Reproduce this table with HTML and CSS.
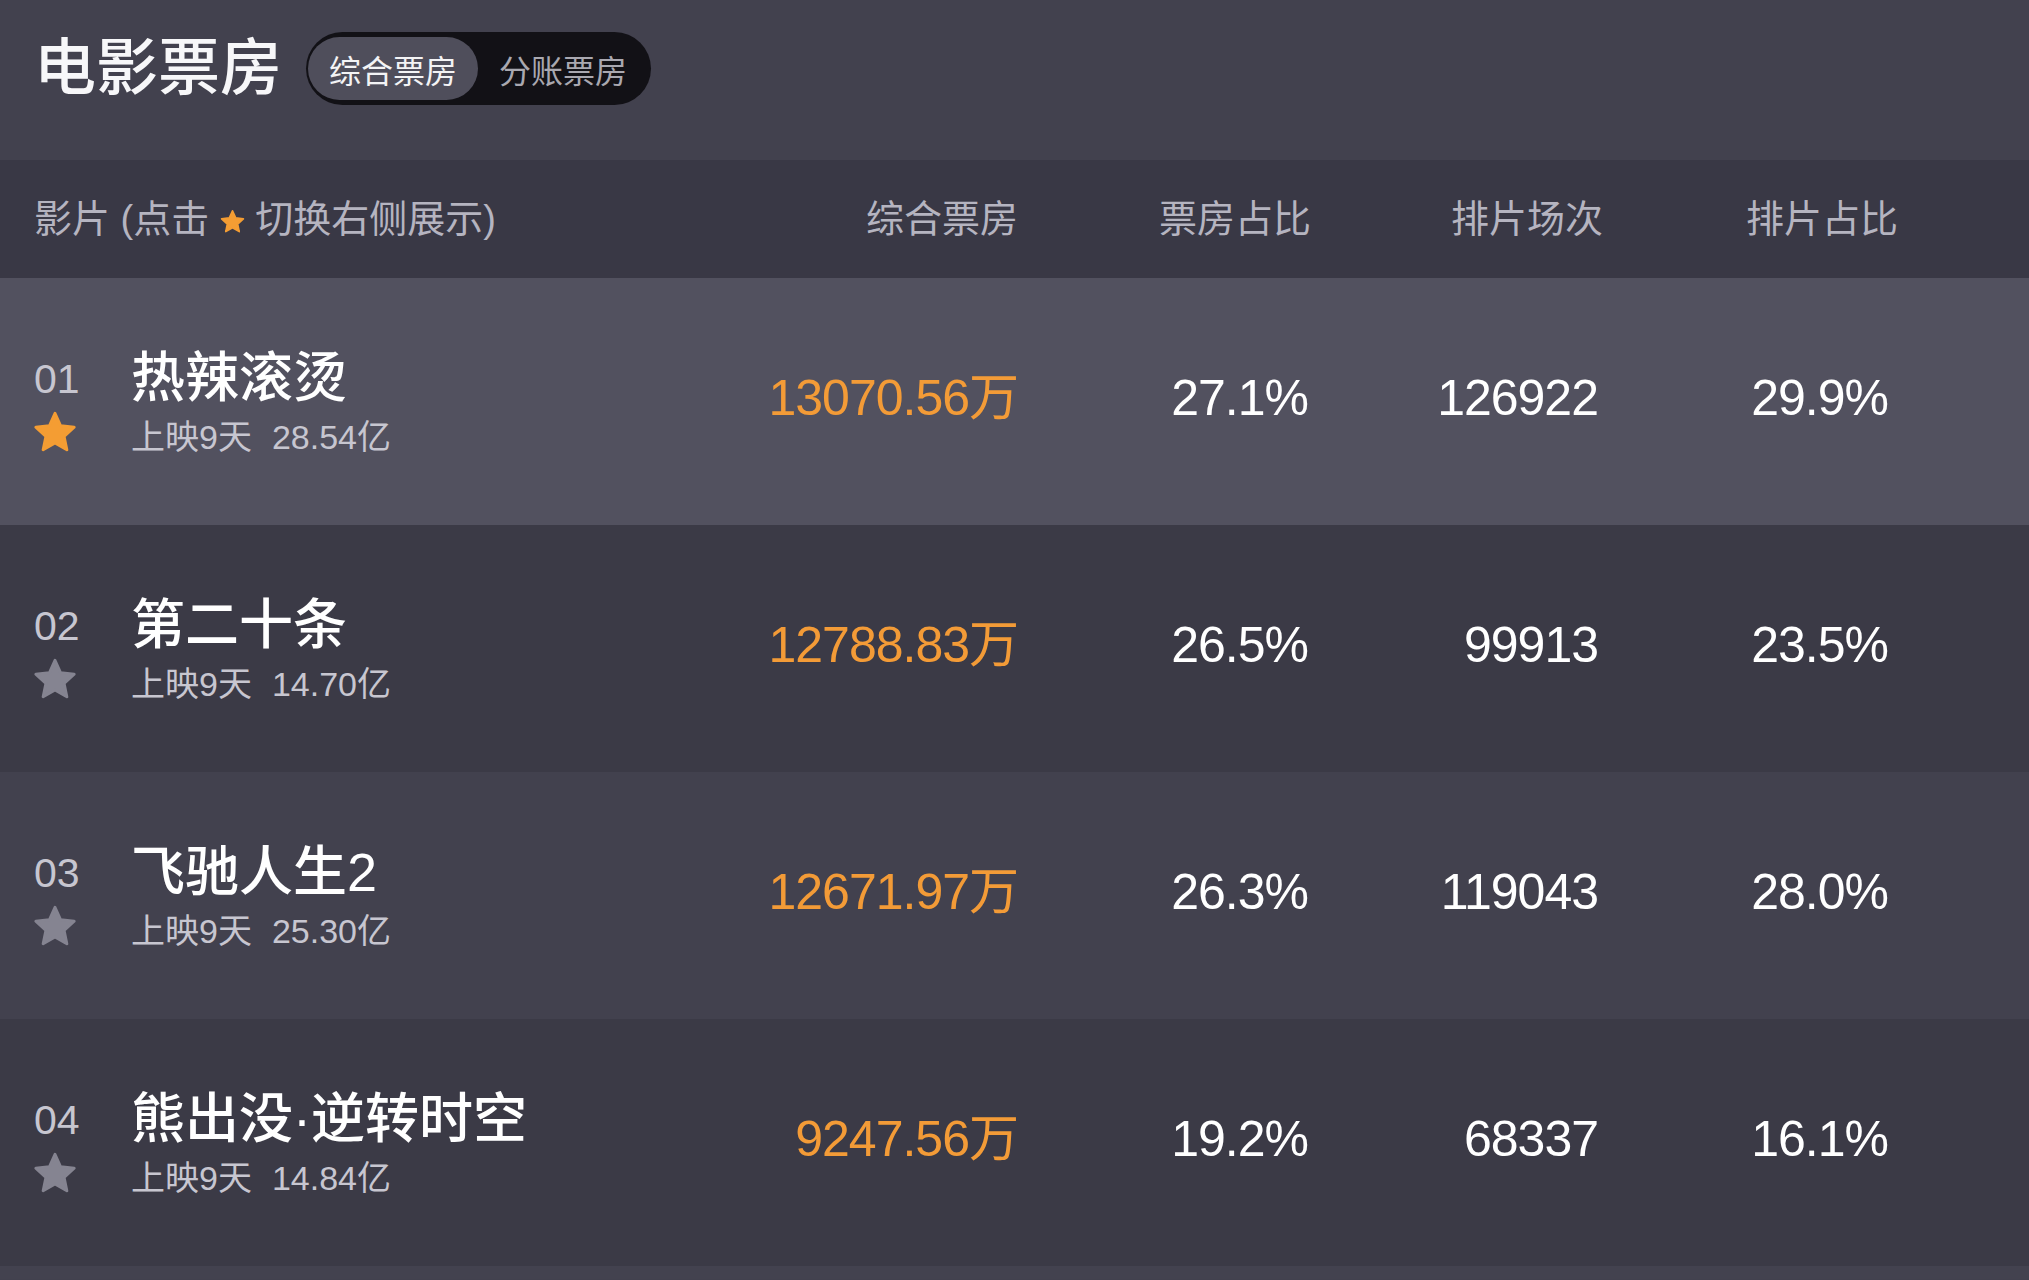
FILE: index.html
```html
<!DOCTYPE html>
<html lang="zh-CN">
<head>
<meta charset="utf-8">
<title>电影票房</title>
<link rel="stylesheet" href="styles.css">
</head>
<body>
<svg width="0" height="0" class="defs" aria-hidden="true">
  <defs>
    <path id="star" d="M12 1.8 L15.06 8.59 L22.46 9.4 L16.95 14.41 L18.47 21.7 L12 18 L5.53 21.7 L7.05 14.41 L1.54 9.4 L8.94 8.59 Z"/>
  </defs>
</svg>
<div class="page">
  <div class="topbar">
    <h1 class="title">电影票房</h1>
    <div class="toggle">
      <span class="tab active">综合票房</span>
      <span class="tab">分账票房</span>
    </div>
  </div>

  <div class="grid head">
    <div class="h-movie">影片 (点击 <svg class="hstar" viewBox="0 0 24 24"><use href="#star"/></svg> 切换右侧展示)</div>
    <div class="num-h c1">综合票房</div>
    <div class="num-h c2">票房占比</div>
    <div class="num-h c3">排片场次</div>
    <div class="num-h c4">排片占比</div>
  </div>

  <div class="grid row r1">
    <div class="movie">
      <div class="rank"><div class="rank-num">01</div><div class="rank-star"><svg class="star on" viewBox="0 0 24 24"><use href="#star"/></svg></div></div>
      <div class="info"><div class="name">热辣滚烫</div><div class="sub">上映9天<span class="gross">28.54亿</span></div></div>
    </div>
    <div class="num orange">13070.56万</div>
    <div class="num">27.1%</div>
    <div class="num">126922</div>
    <div class="num">29.9%</div>
  </div>

  <div class="grid row r2">
    <div class="movie">
      <div class="rank"><div class="rank-num">02</div><div class="rank-star"><svg class="star" viewBox="0 0 24 24"><use href="#star"/></svg></div></div>
      <div class="info"><div class="name">第二十条</div><div class="sub">上映9天<span class="gross">14.70亿</span></div></div>
    </div>
    <div class="num orange">12788.83万</div>
    <div class="num">26.5%</div>
    <div class="num">99913</div>
    <div class="num">23.5%</div>
  </div>

  <div class="grid row r3">
    <div class="movie">
      <div class="rank"><div class="rank-num">03</div><div class="rank-star"><svg class="star" viewBox="0 0 24 24"><use href="#star"/></svg></div></div>
      <div class="info"><div class="name">飞驰人生2</div><div class="sub">上映9天<span class="gross">25.30亿</span></div></div>
    </div>
    <div class="num orange">12671.97万</div>
    <div class="num">26.3%</div>
    <div class="num">119043</div>
    <div class="num">28.0%</div>
  </div>

  <div class="grid row r4">
    <div class="movie">
      <div class="rank"><div class="rank-num">04</div><div class="rank-star"><svg class="star" viewBox="0 0 24 24"><use href="#star"/></svg></div></div>
      <div class="info"><div class="name">熊出没·逆转时空</div><div class="sub">上映9天<span class="gross">14.84亿</span></div></div>
    </div>
    <div class="num orange">9247.56万</div>
    <div class="num">19.2%</div>
    <div class="num">68337</div>
    <div class="num">16.1%</div>
  </div>

  <div class="grid tail"></div>
</div>
</body>
</html>
```

FILE: styles.css
```css
* { box-sizing: border-box; }
html, body { margin: 0; padding: 0; }
body {
  background: #42414e;
  font-family: "Liberation Sans", "Noto Sans CJK SC", sans-serif;
  color: #fff;
  width: 2029px;
  height: 1280px;
  overflow: hidden;
}
.defs { position: absolute; }

.topbar {
  height: 160px;
  display: flex;
  align-items: flex-start;
  padding: 32px 0 0 34px;
}
.title {
  margin: 0 24px 0 0;
  font-size: 62px;
  line-height: 73px;
  font-weight: 500;
  color: #f7f7f9;
}
.toggle {
  display: flex;
  height: 73px;
  padding: 5px 3px 5px 2px;
  border-radius: 37px;
  background: #121116;
}
.tab {
  display: flex;
  align-items: center;
  padding: 0 21px;
  height: 63px;
  border-radius: 32px;
  font-size: 32px;
  color: #a9a8b0;
}
.tab.active {
  background: #4f4e5b;
  color: #f3f3f5;
}

.grid {
  display: grid;
  grid-template-columns: 1fr 290px 290px 290px 290px;
  padding: 0 141px 0 34px;
  align-items: center;
}
.head {
  height: 118px;
  background: #393845;
  font-size: 38px;
  color: #b5b4c0;
  line-height: 44px;
}
.h-movie { white-space: nowrap; }
.hstar {
  width: 25px;
  height: 25px;
  fill: #f49d33;
  stroke: #f49d33;
  stroke-width: 1.6;
  stroke-linejoin: round;
  vertical-align: -2px;
}
.num-h { text-align: right; white-space: nowrap; }
.c2 { margin-right: -3px; }
.c3 { margin-right: -5px; }
.c4 { margin-right: -10px; }

.row { height: 247px; }
.r1 { background: #52515f; }
.r2 { background: #3b3a46; }
.r3 { background: #42414e; }
.r4 { background: #3b3a46; }
.tail { height: 13px; background: #43424f; }

.movie {
  display: flex;
  align-items: center;
}
.rank {
  width: 97px;
  display: flex;
  flex-direction: column;
}
.rank-num {
  font-size: 41px;
  line-height: 60px;
  color: #c7c6d0;
}
.rank-star {
  height: 46px;
  display: flex;
  align-items: center;
}
.star {
  width: 44px;
  height: 44px;
  margin-left: -1px;
  fill: #858491;
  stroke: #858491;
  stroke-width: 1.6;
  stroke-linejoin: round;
}
.star.on {
  fill: #f49d33;
  stroke: #f49d33;
}
.info {
  display: flex;
  flex-direction: column;
}
.name {
  font-size: 54px;
  line-height: 71px;
  font-weight: 500;
  color: #fff;
  white-space: nowrap;
}
.sub {
  font-size: 34px;
  line-height: 47px;
  color: #c7c6d0;
  white-space: nowrap;
}
.gross { margin-left: 20px; }

.num {
  text-align: right;
  font-size: 50px;
  line-height: 60px;
  letter-spacing: -1px;
  color: #fff;
  margin-bottom: 8px;
}
.num.orange { color: #f39b37; }
```
